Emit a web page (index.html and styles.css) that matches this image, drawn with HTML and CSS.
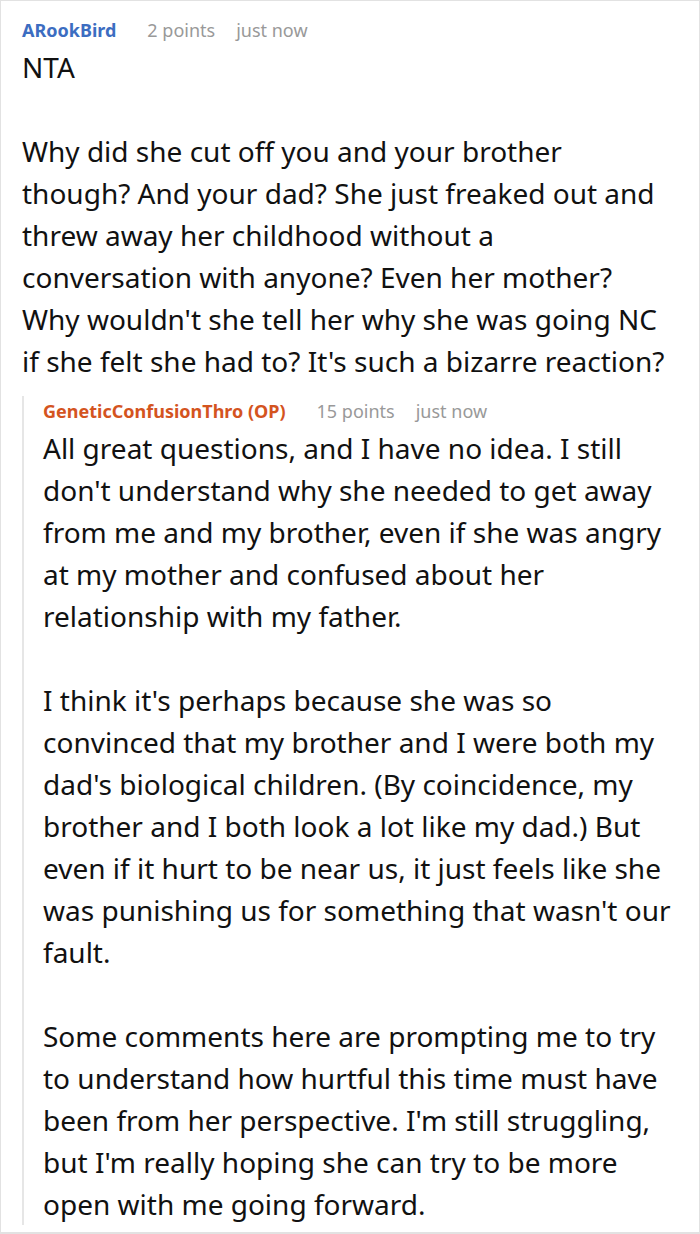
FILE: index.html
```html
<!DOCTYPE html>
<html>
<head>
<meta charset="utf-8">
<link rel="stylesheet" href="styles.css">
</head>
<body>
<div class="card">
  <div class="comment">
    <div class="meta">
      <span class="author">ARookBird</span>
      <span class="info">2 points</span>
      <span class="info">just now</span>
    </div>
    <div class="body">
      <p>NTA</p>
      <p>Why did she cut off you and your brother though? And your dad? She just freaked out and threw away her childhood without a conversation with anyone? Even her mother? Why wouldn't she tell her why she was going NC if she felt she had to? It's such a bizarre reaction?</p>
    </div>
    <div class="reply">
      <div class="meta">
        <span class="author op">GeneticConfusionThro (OP)</span>
        <span class="info">15 points</span>
        <span class="info">just now</span>
      </div>
      <div class="body">
        <p>All great questions, and I have no idea. I still don't understand why she needed to get away from me and my brother, even if she was angry at my mother and confused about her relationship with my father.</p>
        <p>I think it's perhaps because she was so convinced that my brother and I were both my dad's biological children. (By coincidence, my brother and I both look a lot like my dad.) But even if it hurt to be near us, it just feels like she was punishing us for something that wasn't our fault.</p>
        <p>Some comments here are prompting me to try to understand how hurtful this time must have been from her perspective. I'm still struggling, but I'm really hoping she can try to be more open with me going forward.</p>
      </div>
    </div>
  </div>
</div>
</body>
</html>
```

FILE: styles.css
```css
html, body {
  margin: 0;
  padding: 0;
  background: #ffffff;
}
.card {
  box-sizing: border-box;
  width: 700px;
  height: 1234px;
  border: 1px solid #e2e2e2;
  border-bottom-width: 2px;
  background: #fff;
  overflow: hidden;
  font-family: "Noto Sans", "Open Sans", sans-serif;
  color: #111;
}
.comment {
  padding: 14px 32px 0 21px;
}
.meta {
  display: flex;
  gap: 21px;
  font-size: 18px;
  line-height: 30px;
  height: 30px;
  align-items: center;
  margin-bottom: 1px;
  white-space: nowrap;
}
.author {
  font-weight: 700;
  color: #3c6dc1;
  margin-right: 10px;
}
.author.op {
  color: #d4541f;
}
.info {
  color: #999;
}
.body {
  font-size: 28px;
  line-height: 42px;
}
.body p {
  margin: 0 0 42px 0;
}
.body p:last-child {
  margin-bottom: 0;
}
.reply {
  margin-top: 27px;
  margin-right: -5px;
  border-left: 2px solid #e6e6e6;
  padding-left: 19px;
}
.reply .meta {
  margin-top: -13px;
}
.reply .body p:last-child {
  margin-bottom: -10px;
}
```
